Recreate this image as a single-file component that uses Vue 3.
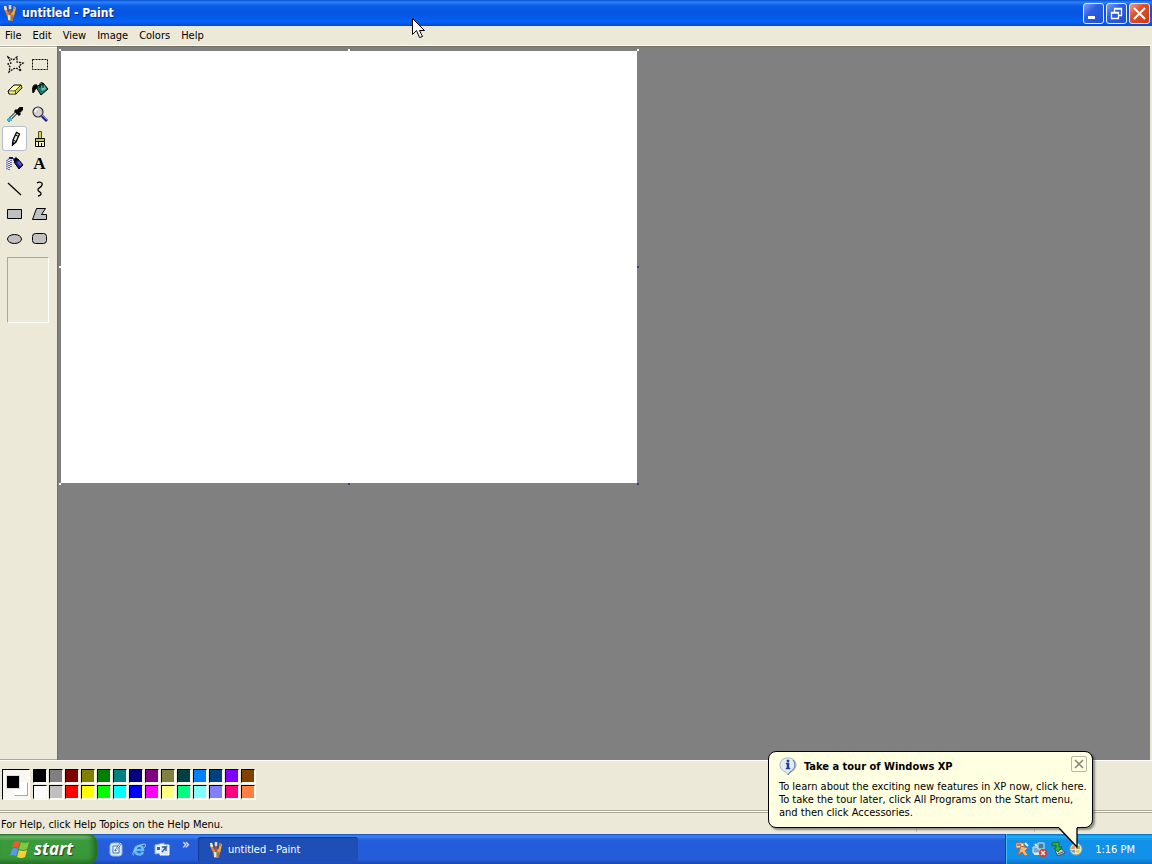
<template>
  <div class="desktop">
    <svg class="symbols" aria-hidden="true">
      <symbol id="icon-paint" viewBox="0 0 16 16">
        <path d="M4 7h9l-2 9H6z" fill="#a9aa9c" stroke="#4c4a48" stroke-width=".7" />
        <path d="M6 9h2v6H6z" fill="#e9e4cd" />
        <path d="M3 3l3 7" stroke="#e0813c" stroke-width="2.500" />
        <path d="M3 1l1 4" stroke="#ffe3b0" stroke-width="2.500" />
        <path d="M8 2v8" stroke="#b8552c" stroke-width="2.500" />
        <path d="M8 0v4" stroke="#e8dcb4" stroke-width="2.500" />
        <path d="M13 2l-2 8" stroke="#e6b13a" stroke-width="2.500" />
        <path d="M12 1l0 3" stroke="#a9824a" stroke-width="2" />
        <path d="M10 10v5" stroke="#c7503e" stroke-width="1.500" />
      </symbol>
      <symbol id="icon-freeform" viewBox="0 0 20 20">
        <path d="M3 3l5 3 4-3 0 5 6 1-4 3 2 5-5-3-3 1-4 3 1-5-2-3 3-1z" fill="none" stroke="#000" stroke-width="1.200" stroke-dasharray="2 1" />
      </symbol>
      <symbol id="icon-select" viewBox="0 0 20 20">
        <path d="M2.500 5.500h15v10h-15z" fill="none" stroke="#000" stroke-dasharray="2 1" />
      </symbol>
      <symbol id="icon-eraser" viewBox="0 0 20 20">
        <path d="M3 12l6-6h7l1 3-6 6H4z" fill="#ffff99" stroke="#000" />
        <path d="M3.500 12H10l6-6M10 12l1 3" fill="none" stroke="#000" stroke-width=".8" />
        <path d="M4 12.500h5.500l.5 2H5z" fill="#f1ec61" />
        <path d="M11 12l.5 2 5-5-.5-2z" fill="#c8c33f" />
      </symbol>
      <symbol id="icon-fill" viewBox="0 0 20 20">
        <path d="M6 8l7-4 5 6-7 6z" fill="#17796d" stroke="#000" />
        <path d="M11 8l3-2 2 4-4 2z" fill="#6ec3ab" />
        <path d="M10 9V5c0-2 3-2 3 0v4" fill="none" stroke="#000" />
        <path d="M7 6C3 5 2 8 3 14c2-1 1-4 4-5z" fill="#000" stroke="#000" />
      </symbol>
      <symbol id="icon-picker" viewBox="0 0 20 20">
        <path d="M12 8L5 15l-2 2" stroke="#000" stroke-width="3" />
        <path d="M11 9l-6 6" stroke="#c6eff5" stroke-width="1.400" />
        <path d="M3 14h4v3H2z" fill="#39bcd1" />
        <path d="M10 6l5 5M12 8l4-4" stroke="#000" stroke-width="3" />
        <path d="M15 3h3v3l-3 3-3-3z" />
      </symbol>
      <symbol id="icon-zoom" viewBox="0 0 20 20">
        <circle cx="8" cy="8" r="5" fill="#d0d0d0" stroke="#333" stroke-width="1.200" />
        <path d="M5 8c0-2 1-3 3-3" fill="none" stroke="#fff" stroke-width="1.500" />
        <path d="M12 12l5 5" stroke="#20208f" stroke-width="3" />
        <path d="M12 11l5 5" stroke="#8181dc" />
      </symbol>
      <symbol id="icon-pencil" viewBox="0 0 20 20">
        <path d="M8 11l3.500-7.500 3 1.500-3.500 8-3.500 3z" fill="#e9e6da" stroke="#000" stroke-width="1.300" />
        <path d="M10.500 6l3 1.500M8 11l3 1.500" stroke="#000" />
        <path d="M7 13v4l3-3z" />
      </symbol>
      <symbol id="icon-brush" viewBox="0 0 20 20">
        <path d="M8.500 2.500h3v7h-3z" fill="#d5d54b" stroke="#54540f" />
        <path d="M5.500 9.500h9v3h-9z" fill="#c9ca37" stroke="#000" />
        <path d="M5.500 12.500h9v5h-9z" fill="#f5f1c2" stroke="#000" />
        <path d="M8.500 13v4M11.500 14v3" stroke="#000" />
      </symbol>
      <symbol id="icon-spray" viewBox="0 0 20 20">
        <path d="M9 8l4-3 5 6-4 4z" fill="#17178f" stroke="#000" />
        <path d="M9 7l3-3" stroke="#000" stroke-width="3" />
        <path d="M12 9l2-2 3 4-2 1z" fill="#5555c3" />
        <path d="M9 5L4 4 2 7v9M4 7v9M6 6v7" fill="none" stroke="#202095" stroke-width="1.300" stroke-dasharray="1 1" />
        <path d="M4 4h4" stroke="#12127a" stroke-width="2" />
      </symbol>
      <symbol id="icon-line" viewBox="0 0 20 20">
        <path d="M3 4l13 12" stroke="#000" stroke-width="1.200" />
      </symbol>
      <symbol id="icon-curve" viewBox="0 0 20 20">
        <path d="M7 4c3-2 6 0 5 2-1 3-5 3-4 5 0 2 4 2 3 4 0 1-2 2-3 2" fill="none" stroke="#000" stroke-width="1.300" />
      </symbol>
      <symbol id="icon-rect" viewBox="0 0 20 20">
        <path d="M2.500 5.500h14v9h-14z" fill="#c0c0c0" stroke="#000" />
      </symbol>
      <symbol id="icon-polygon" viewBox="0 0 20 20">
        <path d="M6.500 4.500h9l-4 6h5v5h-14z" fill="#c0c0c0" stroke="#000" />
      </symbol>
      <symbol id="icon-ellipse" viewBox="0 0 20 20">
        <ellipse cx="9.500" cy="10" rx="7" ry="4.500" fill="#c0c0c0" stroke="#000" />
      </symbol>
      <symbol id="icon-rounded" viewBox="0 0 20 20">
        <rect x="2.500" y="4.500" width="14" height="10" rx="3" fill="#c0c0c0" stroke="#000" />
      </symbol>
      <symbol id="icon-desktop" viewBox="0 0 16 16">
        <rect x="2" y="2" width="12" height="13" rx="3" fill="#d9ebfb" stroke="#8fbcf0" />
        <path d="M5 5h6v7H5z" fill="#fff" stroke="#3a6fae" />
        <path d="M7 10l6-8" fill="none" stroke="#30629b" stroke-width="2" />
        <path d="M8 9l5-7" fill="none" stroke="#f3f8fc" />
      </symbol>
      <symbol id="icon-ie" viewBox="0 0 16 16">
        <path d="M12 11c-2 4-8 3-8-2s8-6 8 0H5" fill="none" stroke="#62bdf7" stroke-width="2.500" />
        <path d="M3 14c-4 0 3-10 10-11 3 0 1 3 0 4" fill="none" stroke="#a2d8fa" />
      </symbol>
      <symbol id="icon-media" viewBox="0 0 16 16">
        <path d="M1 4l9-2v10l-9 1z" fill="#e8f2fa" stroke="#7eb0e5" />
        <path d="M6 4h9v10H6z" fill="#d3e7f8" stroke="#fff" />
        <path d="M8 6h4v4M13 5l-5 6" fill="none" stroke="#285c9e" stroke-width="1.300" />
        <path d="M3 6h3v3H3z" fill="#3268ad" />
      </symbol>
      <symbol id="icon-tour" viewBox="0 0 16 16">
        <path d="M2 2h8v5H2z" fill="#f8e5c8" stroke="#a96b45" />
        <path d="M7 5l7 2-3 3 3 4-3 1-3-4-4 3z" fill="#f1bb75" stroke="#bd6533" />
        <path d="M11 2l3 3" stroke="#e5eff6" stroke-width="2" />
        <path d="M3 3h4v2H3z" fill="#db6846" />
      </symbol>
      <symbol id="icon-network" viewBox="0 0 16 16">
        <path d="M1 6h7v6H1z" fill="#80a5c7" stroke="#e2edf4" />
        <path d="M6 2h6v6H6z" fill="#457c9b" stroke="#d8e8ec" />
        <path d="M2 13h6M3 3l2 2" stroke="#dcefdc" stroke-width="2" />
        <circle cx="11" cy="12" r="4" fill="#dc3b22" />
        <path d="M9 10l4 4m0-4l-4 4" stroke="#fff" stroke-width="1.300" />
      </symbol>
      <symbol id="icon-device" viewBox="0 0 16 16">
        <path d="M5 10l7-2 3 4-7 3z" fill="#c4cdd0" stroke="#364e55" />
        <path d="M2 2l7-1v5h3l-4 5-4-4h2V4L2 5z" fill="#38b439" stroke="#12712c" />
        <path d="M8 13l5-2" stroke="#30555e" />
      </symbol>
      <symbol id="icon-xp" viewBox="0 0 16 16">
        <circle cx="8" cy="8" r="6" fill="#e9e7d4" stroke="#8fa79c" />
        <path d="M4 5l3-1v4H3z" fill="#d99a6c" />
        <path d="M8 4l4 1v3H8z" fill="#a4b878" />
        <path d="M3 9h4v3l-3-1z" fill="#7ba3bd" />
        <path d="M8 9h4l-1 3H8z" fill="#e0cb7c" />
      </symbol>
    </svg>

    <header class="title-bar">
      <svg class="title-icon" aria-hidden="true"><use href="#icon-paint" /></svg>
      <h1>untitled - Paint</h1>
      <div class="window-buttons">
        <button class="win-btn" aria-label="Minimize">
          <svg viewBox="0 0 19 19"><path d="M4 12h7v3H4z" fill="#fff" /></svg>
        </button>
        <button class="win-btn" aria-label="Restore">
          <svg viewBox="0 0 19 19">
            <path d="M7.500 8V4.500h7v7H12M7 5h8" fill="none" stroke="#fff" stroke-width="1.300" />
            <path d="M4.500 8.500h7v6h-7zM4 9h8" fill="none" stroke="#fff" stroke-width="1.300" />
          </svg>
        </button>
        <button class="win-btn close" aria-label="Close">
          <svg viewBox="0 0 19 19"><path d="M4 4l11 11m0-11l-11 11" stroke="#fff" stroke-width="2.200" /></svg>
        </button>
      </div>
    </header>

    <nav class="menu-bar">
      <button v-for="m in menus" :key="m">{{ m }}</button>
    </nav>

    <main class="workspace">
      <aside class="toolbox">
        <div class="tools">
          <button
            v-for="t in tools"
            :key="t.id"
            class="tool"
            :class="{ active: tool === t.id }"
            :aria-label="t.label"
            @click="tool = t.id"
          >
            <span v-if="t.id === 'text'" class="letter">A</span>
            <svg v-else><use :href="'#icon-' + t.id" /></svg>
          </button>
        </div>
        <div class="tool-options"></div>
      </aside>
      <section class="pasteboard">
        <div class="canvas">
          <i v-for="h in handles" :key="h" class="handle" :class="h"></i>
        </div>
      </section>
    </main>

    <section class="color-box">
      <div class="current">
        <span class="back"></span>
        <span class="fore" :style="{ background: color }"></span>
      </div>
      <div class="swatches">
        <button
          v-for="c in colors"
          :key="c"
          class="swatch"
          :style="{ background: c }"
          :aria-label="c"
          @click="color = c"
        ></button>
      </div>
    </section>

    <footer class="status-bar">
      <span class="status-help">For Help, click Help Topics on the Help Menu.</span>
      <span class="status-cell"></span>
      <span class="status-cell"></span>
    </footer>

    <div class="taskbar">
      <button class="start">
        <svg viewBox="0 0 20 20" aria-hidden="true">
          <path d="M4 3q3-2 6 0L8 9q-3-2-6 0z" fill="#ee5a29" />
          <path d="M11 3q3 2 8 0l-2 7q-4 2-8 0z" fill="#83c83c" />
          <path d="M2 10q3-2 6 0l-2 7q-3-2-6 0z" fill="#5599ef" />
          <path d="M9 11q4 2 8 0l-2 7q-4 2-8 0z" fill="#f8cf36" />
        </svg>
        <span>start</span>
      </button>
      <div class="quick-launch">
        <button aria-label="Show Desktop"><svg><use href="#icon-desktop" /></svg></button>
        <button aria-label="Internet Explorer"><svg><use href="#icon-ie" /></svg></button>
        <button aria-label="Media Player"><svg><use href="#icon-media" /></svg></button>
        <button class="more" aria-label="More">»</button>
      </div>
      <button class="task">
        <svg aria-hidden="true"><use href="#icon-paint" /></svg>
        <span>untitled - Paint</span>
      </button>
      <div class="tray">
        <svg v-for="i in trayIcons" :key="i"><use :href="'#icon-' + i" /></svg>
        <time>1:16 PM</time>
      </div>
    </div>

    <div v-if="balloon" class="balloon">
      <div class="balloon-head">
        <svg class="info" viewBox="0 0 18 18" aria-hidden="true">
          <path d="M9 1a7 7 0 0 1 2 14l-2 3-2-3A7 7 0 0 1 9 1z" fill="#e4ebf5" stroke="#a9b6ca" />
          <path d="M14 3c4 5 1 10-3 12l-2 3" fill="none" stroke="#5c6f91" />
          <path d="M8 3h2v2H8zM7 6h3v5h1v1H7v-1h1V7H7z" fill="#1840a0" stroke="#1840a0" stroke-width=".5" />
        </svg>
        <h2>Take a tour of Windows XP</h2>
        <button aria-label="Close" @click="balloon = false">
          <svg viewBox="0 0 14 14"><path d="M3 3l8 8m0-8l-8 8" stroke="#85857a" stroke-width="1.500" /></svg>
        </button>
      </div>
      <p>
        To learn about the exciting new features in XP now, click here.<br />
        To take the tour later, click All Programs on the Start menu,<br />
        and then click Accessories.
      </p>
      <svg class="tail" viewBox="0 0 20 22" aria-hidden="true">
        <path d="M0 0v1l18 19V0z" fill="#ffffe1" />
        <path d="M0 1l18 19V1" fill="none" stroke="#000" stroke-width="1.300" />
      </svg>
    </div>

    <svg class="pointer" viewBox="0 0 13 21" aria-hidden="true">
      <path d="M.5.5v16l4-4 3 7 3-1-3-6h5z" fill="#fff" stroke="#000" />
    </svg>
  </div>
</template>

<script setup>
import { ref } from 'vue';

const tool = ref('pencil');
const color = ref('#000000');
const balloon = ref(true);

const menus = ['File', 'Edit', 'View', 'Image', 'Colors', 'Help'];

const tools = [
  { id: 'freeform', label: 'Free-Form Select' },
  { id: 'select', label: 'Select' },
  { id: 'eraser', label: 'Eraser' },
  { id: 'fill', label: 'Fill With Color' },
  { id: 'picker', label: 'Pick Color' },
  { id: 'zoom', label: 'Magnifier' },
  { id: 'pencil', label: 'Pencil' },
  { id: 'brush', label: 'Brush' },
  { id: 'spray', label: 'Airbrush' },
  { id: 'text', label: 'Text' },
  { id: 'line', label: 'Line' },
  { id: 'curve', label: 'Curve' },
  { id: 'rect', label: 'Rectangle' },
  { id: 'polygon', label: 'Polygon' },
  { id: 'ellipse', label: 'Ellipse' },
  { id: 'rounded', label: 'Rounded Rectangle' }
];

const handles = ['nw', 'n', 'ne', 'w', 'e', 'sw', 's', 'se'];

const colors = [
  '#000000', '#808080', '#800000', '#808000', '#008000', '#008080', '#000080',
  '#800080', '#808040', '#004040', '#0080ff', '#004080', '#8000ff', '#804000',
  '#ffffff', '#c0c0c0', '#ff0000', '#ffff00', '#00ff00', '#00ffff', '#0000ff',
  '#ff00ff', '#ffff80', '#00ff80', '#80ffff', '#8080ff', '#ff0080', '#ff8040'
];

const trayIcons = ['tour', 'network', 'device', 'xp'];
</script>

<style>
body {
  margin: 0;
}
</style>

<style scoped>
.desktop {
  position: relative;
  display: flex;
  flex-direction: column;
  min-height: 100vh;
  overflow: hidden;
  background: #ece9d8;
  color: #000;
  font-family: Tahoma, "DejaVu Sans Condensed", "DejaVu Sans", sans-serif;
  font-size: 11px;
  line-height: 13px;
}
button {
  padding: 0;
  border: none;
  background: none;
  color: inherit;
  font: inherit;
}
svg {
  display: block;
  flex: none;
}
.symbols {
  position: absolute;
  width: 0;
  height: 0;
}

/* title bar */
.title-bar {
  display: flex;
  align-items: center;
  height: 26px;
  padding: 0 2px 0 2px;
  box-sizing: border-box;
  background: linear-gradient(#0a4fd0 0%, #2a83fa 8%, #0a5ce6 22%, #0355e2 55%, #0563f8 85%, #0347c8 100%);
  color: #fff;
}
.title-icon {
  width: 16px;
  height: 16px;
}
.title-bar h1 {
  flex: 1;
  margin: 0 0 0 4px;
  font-size: 12px;
  font-weight: 700;
  line-height: 16px;
  text-shadow: 1px 1px #0a2a80;
}
.window-buttons {
  display: flex;
  gap: 2px;
}
.win-btn {
  width: 21px;
  height: 21px;
  box-sizing: border-box;
  border: 1px solid #e6eefc;
  border-radius: 3px;
  background: linear-gradient(135deg, #7ba0f2, #2c5fe0 40%, #1f50d0);
}
.win-btn.close {
  background: linear-gradient(135deg, #f0a088, #dd4f2a 40%, #c83c14);
}
.win-btn svg {
  width: 19px;
  height: 19px;
}

/* menu */
.menu-bar {
  display: flex;
  gap: 11px;
  height: 20px;
  padding-left: 5px;
  box-sizing: border-box;
  border-bottom: 1px solid #fff;
}

/* workspace */
.workspace {
  flex: 1;
  display: flex;
}
.toolbox {
  width: 57px;
  padding: 4px 2px 0;
  box-sizing: border-box;
  border-top: 1px solid #aca899;
  border-bottom: 1px solid #aca899;
  box-shadow: inset 0 1px #fff;
}
.tools {
  display: grid;
  grid-template-columns: repeat(2, 25px);
  grid-auto-rows: 25px;
}
.tool {
  display: flex;
  align-items: center;
  justify-content: center;
  border: 1px solid transparent;
}
.tool.active {
  border-color: #b4bccd;
  border-radius: 3px;
  background: #fff;
}
.tool svg {
  width: 20px;
  height: 20px;
}
.letter {
  font-family: "Liberation Serif", serif;
  font-size: 17px;
  font-weight: 700;
  line-height: 20px;
}
.tool-options {
  width: 42px;
  height: 66px;
  margin: 6px 0 0 5px;
  box-sizing: border-box;
  border: 1px solid;
  border-color: #aca899 #fff #fff #aca899;
}
.pasteboard {
  flex: 1;
  margin-right: 2px;
  padding: 4px 3px 3px;
  border-top: 1px solid #716f64;
  border-left: 1px solid #716f64;
  background: #808080;
}
.canvas {
  position: relative;
  width: 576px;
  height: 432px;
  background: #fff;
}
.handle {
  position: absolute;
  width: 2px;
  height: 2px;
  background: #fff;
}
.handle.e,
.handle.s,
.handle.se {
  background: #3c3c88;
}
.nw, .n, .ne { top: -2px; }
.w, .e { top: 215px; }
.sw, .s, .se { bottom: -2px; }
.nw, .w, .sw { left: -2px; }
.n, .s { left: 287px; }
.ne, .e, .se { right: -2px; }

/* palette */
.color-box {
  display: flex;
  gap: 3px;
  height: 50px;
  padding: 8px 0 0 2px;
  box-sizing: border-box;
  border-top: 1px solid #fff;
}
.current {
  position: relative;
  width: 28px;
  height: 31px;
  box-sizing: border-box;
  border: 1px solid;
  border-color: #000 #fff #fff #000;
  background: #f8f7f2;
}
.fore,
.back {
  position: absolute;
  box-sizing: border-box;
  width: 14px;
  height: 14px;
  border: 1px solid #dedcd0;
}
.fore {
  top: 5px;
  left: 3px;
}
.back {
  top: 12px;
  left: 11px;
  border-color: #fff #aca899 #aca899 #fff;
  background: #fff;
}
.swatches {
  display: grid;
  grid-template-columns: repeat(14, 14px);
  grid-auto-rows: 14px;
  gap: 2px;
}
.swatch {
  border: 1px solid;
  border-color: #000 #f8f7f0 #f8f7f0 #000;
  background-clip: padding-box;
  box-shadow: 1px 1px #fff;
}

/* status */
.status-bar {
  display: flex;
  align-items: center;
  height: 24px;
  box-sizing: border-box;
  border-top: 1px solid #aca899;
  box-shadow: inset 0 1px #fff, inset 0 2px #aca899;
}
.status-help {
  flex: 1;
  padding: 3px 0 0 1px;
}
.status-cell {
  width: 117px;
  height: 18px;
  border-left: 1px solid #c9c6b6;
}

/* taskbar */
.taskbar {
  display: flex;
  height: 30px;
  background: linear-gradient(#1f50b8 0%, #3b86f3 7%, #245edb 20%, #245bd8 85%, #1b47ae 100%);
  color: #fff;
}
.start {
  display: flex;
  align-items: center;
  gap: 4px;
  width: 97px;
  padding-left: 10px;
  border-radius: 0 8px 8px 0;
  background: linear-gradient(#357a35 0%, #72b972 8%, #3c9a3c 22%, #389838 80%, #2a732a 100%);
  box-shadow: inset -4px 0 5px #276c27;
}
.start svg {
  width: 20px;
  height: 20px;
}
.start span {
  font-family: "Open Sans", sans-serif;
  font-size: 17px;
  font-style: italic;
  font-weight: 700;
  line-height: 24px;
  text-shadow: 1px 1px 1px #204a20;
}
.quick-launch {
  display: flex;
  align-items: center;
  gap: 7px;
  width: 101px;
  padding-left: 11px;
  box-sizing: border-box;
}
.quick-launch svg,
.tray svg,
.task svg {
  width: 16px;
  height: 16px;
}
.more {
  align-self: flex-start;
  margin-left: 5px;
  font-size: 14px;
  line-height: 20px;
}
.task {
  display: flex;
  align-items: center;
  gap: 4px;
  width: 160px;
  margin: 3px 0 2px;
  padding-left: 10px;
  border-radius: 3px;
  background: #1e4fb6;
  box-shadow: inset 1px 1px 1px #15398c;
}
.tray {
  display: flex;
  align-items: center;
  gap: 2px;
  margin-left: auto;
  padding: 0 17px 0 8px;
  border-left: 1px solid #0b3f9e;
  background: linear-gradient(#0c6ac4 0%, #1fb0f8 8%, #1290e8 22%, #1192ea 80%, #0d70c4 100%);
  box-shadow: inset 1px 0 #3cc0f8;
}
.tray time {
  margin-left: 9px;
}

/* balloon over the notification area */
.balloon {
  position: absolute;
  right: 59px;
  bottom: 36px;
  width: 325px;
  height: 77px;
  padding: 4px 5px 0 10px;
  box-sizing: border-box;
  border: 1px solid #000;
  border-radius: 8px;
  background: #ffffe1;
  box-shadow: 2px 2px 2px rgba(0, 0, 0, 0.4);
}
.balloon-head {
  display: flex;
  align-items: center;
  height: 20px;
}
.info {
  width: 18px;
  height: 18px;
}
.balloon h2 {
  flex: 1;
  margin: 0 0 0 7px;
  font-size: 11px;
  font-weight: 700;
}
.balloon button {
  align-self: flex-start;
  width: 16px;
  height: 16px;
  box-sizing: border-box;
  border: 1px solid #b8b8a8;
  border-radius: 2px;
}
.balloon button svg {
  width: 14px;
  height: 14px;
}
.balloon p {
  margin: 4px 0 0;
  white-space: nowrap;
}
.tail {
  position: absolute;
  top: 75px;
  right: 13px;
  width: 20px;
  height: 22px;
}

.pointer {
  position: absolute;
  top: 18px;
  left: 412px;
  width: 13px;
  height: 21px;
}
</style>
